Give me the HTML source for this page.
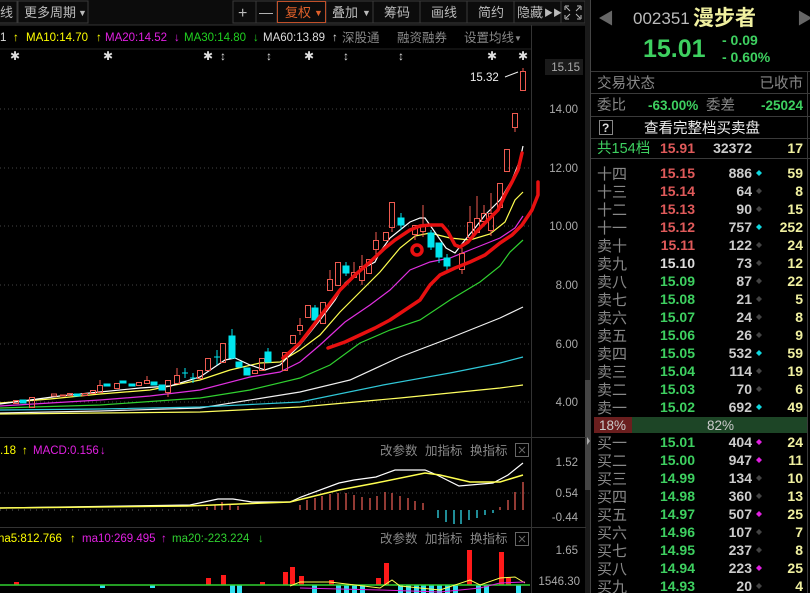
<!DOCTYPE html>
<html><head><meta charset="utf-8"><style>
html,body{margin:0;padding:0;background:#000;width:810px;height:593px;overflow:hidden}
svg{display:block}
text{font-family:"Liberation Sans","Noto Sans CJK SC",sans-serif}
</style></head><body>
<svg width="810" height="593" viewBox="0 0 810 593" xmlns="http://www.w3.org/2000/svg">
<rect width="810" height="593" fill="#000"/>
<!-- toolbar -->
<rect x="0" y="0" width="586" height="25" fill="#0c0c0c"/>
<line x1="0" y1="25" x2="586" y2="25" stroke="#333"/>
<g fill="none" stroke="#3a3a3a">
<rect x="-1" y="1" width="18" height="22"/><rect x="18" y="1" width="70" height="22"/>
<rect x="233" y="1" width="352" height="22"/>
</g>
<g stroke="#3a3a3a"><line x1="256" y1="1" x2="256" y2="23"/><line x1="277" y1="1" x2="277" y2="23"/><line x1="326" y1="1" x2="326" y2="23"/><line x1="373" y1="1" x2="373" y2="23"/><line x1="420" y1="1" x2="420" y2="23"/><line x1="467" y1="1" x2="467" y2="23"/><line x1="514" y1="1" x2="514" y2="23"/><line x1="561" y1="1" x2="561" y2="23"/></g>
<rect x="277.5" y="1.5" width="48" height="21" fill="none" stroke="#c0502a"/>
<g font-size="13" fill="#bbb">
<text x="0" y="17">线</text>
<text x="24" y="17">更多周期</text><text x="78" y="16" font-size="9">▼</text>
<text x="238" y="18" font-size="16">+</text><text x="259" y="17" font-size="14">—</text>
<text x="285" y="17" fill="#e0602a">复权</text><text x="314" y="16" font-size="9" fill="#e0602a">▼</text>
<text x="332" y="17">叠加</text><text x="362" y="16" font-size="9">▼</text>
<text x="384" y="17">筹码</text><text x="431" y="17">画线</text><text x="478" y="17">简约</text>
<text x="517" y="17">隐藏</text><text x="544" y="16" font-size="9">▶▶</text>
</g>
<g stroke="#bbb" fill="none" stroke-width="1"><path d="M565 6h4M565 6v4M581 6h-4M581 6v4M565 19h4M565 19v-4M581 19h-4M581 19v-4M566 7l4 4M580 7l-4 4M566 18l4-4M580 18l-4-4"/></g>
<!-- MA legend -->
<g font-size="11.5" font-family="Liberation Mono,monospace">
<text x="0" y="41" fill="#ddd">1</text><text x="13" y="41" fill="#ff0">↑</text>
<text x="26" y="41" fill="#ff0">MA10:14.70</text><text x="96" y="41" fill="#ff0">↑</text>
<text x="105" y="41" fill="#e020e0">MA20:14.52</text><text x="174" y="41" fill="#e020e0">↓</text>
<text x="184" y="41" fill="#20d020">MA30:14.80</text><text x="253" y="41" fill="#20d020">↓</text>
<text x="263" y="41" fill="#ddd">MA60:13.89</text><text x="332" y="41" fill="#ddd">↑</text>
</g>
<g font-size="12.5" fill="#888"><text x="342" y="42">深股通</text><text x="397" y="42">融资融券</text><text x="464" y="42">设置均线</text><text x="514" y="41" font-size="8">▼</text></g>
<line x1="0" y1="49" x2="531" y2="49" stroke="#222"/>
<g font-size="12" fill="#ddd" text-anchor="middle">
<text x="15" y="60">✱</text><text x="108" y="60">✱</text><text x="208" y="60">✱</text><text x="223" y="60">↕</text><text x="269" y="60">↕</text><text x="309" y="60">✱</text><text x="346" y="60">↕</text><text x="401" y="60">↕</text><text x="492" y="60">✱</text><text x="523" y="60">✱</text>
</g>
<!-- axis -->
<line x1="531.5" y1="25" x2="531.5" y2="593" stroke="#333"/>
<rect x="585" y="0" width="6" height="593" fill="#1a1a1a"/>
<rect x="585" y="380" width="6" height="110" fill="#444"/>
<line x1="590.5" y1="0" x2="590.5" y2="593" stroke="#444"/>
<g stroke="#444" stroke-dasharray="1,3"><line x1="0" y1="109" x2="531" y2="109"/><line x1="0" y1="168" x2="531" y2="168"/><line x1="0" y1="226" x2="531" y2="226"/><line x1="0" y1="285" x2="531" y2="285"/><line x1="0" y1="344" x2="531" y2="344"/><line x1="0" y1="402" x2="531" y2="402"/><line x1="0" y1="493" x2="531" y2="493"/></g>
<rect x="545" y="59" width="38" height="16" fill="#1a1a1a"/>
<g font-size="11.5" fill="#aaa" text-anchor="end" font-family="Liberation Mono,monospace">
<text x="580" y="71">15.15</text><text x="578" y="113">14.00</text><text x="578" y="172">12.00</text><text x="578" y="230">10.00</text><text x="578" y="289">8.00</text><text x="578" y="348">6.00</text><text x="578" y="406">4.00</text>
<text x="578" y="466">1.52</text><text x="578" y="497">0.54</text><text x="578" y="521">-0.44</text>
<text x="578" y="554">1.65</text><text x="580" y="585">1546.30</text>
</g>
<line x1="0" y1="437.5" x2="586" y2="437.5" stroke="#333"/>
<line x1="0" y1="527.5" x2="586" y2="527.5" stroke="#333"/>
<!-- MA lines -->
<g fill="none" stroke-width="1.2">
<polyline stroke="#f0f0f0" points="0,413 100,411 200,408 300,392 350,380 400,357 450,338 500,318 523,307"/>
<polyline stroke="#30c8d8" points="0,410 100,409 200,407 300,402 383,385 450,373 500,363 523,357"/>
<polyline stroke="#ffff60" points="0,414 100,413 200,412 300,407 400,398 500,388 523,385"/>
<polyline stroke="#30d030" points="0,408 100,405 200,398 250,390 300,378 330,365 360,343 390,330 420,320 450,300 480,282 500,266 510,252 523,240"/>
<polyline stroke="#e030e0" points="0,406 50,403 100,400 150,396 200,390 250,377 280,372 300,362 320,345 345,322 370,305 390,290 410,270 430,262 450,258 475,248 500,238 515,228 523,216"/>
<polyline stroke="#ffff50" points="0,403 50,399 100,394 150,390 200,380 230,370 260,363 280,362 300,350 320,335 340,312 360,292 380,272 400,248 415,236 430,233 450,238 470,240 490,234 505,222 515,200 523,192"/>
<polyline stroke="#ffffff" points="0,404 30,400 60,396 100,392 140,388 170,386 200,377 225,360 235,358 250,365 265,370 280,365 300,345 320,320 335,300 345,283 360,270 375,262 380,252 390,238 400,230 410,222 420,218 425,218 432,228 446,248 455,253 465,240 475,228 485,215 500,200 512,180 520,160 523,146"/>
</g>
<!-- candles -->
<g stroke="#ee5a50" fill="none" stroke-width="1">
<rect x="520.5" y="71.5" width="5" height="19"/><path d="M523 68v3"/>
<rect x="512.5" y="113.5" width="5" height="14"/><path d="M515 128v4"/>
<rect x="504.5" y="149.5" width="5" height="22"/>
<rect x="497.5" y="183.5" width="5" height="24"/>
<rect x="488.5" y="213.5" width="5" height="17"/><path d="M491 193v20M491 231v5"/>
<rect x="481.5" y="213.5" width="5" height="8"/><path d="M484 205v8"/>
<rect x="474.5" y="218.5" width="5" height="14"/><path d="M477 196v22"/>
<rect x="467.5" y="222.5" width="5" height="15"/><path d="M470 206v16"/>
<rect x="459.5" y="253.5" width="5" height="16"/><path d="M462 248v5M462 270v4"/>
<rect x="420.5" y="225.5" width="5" height="6"/><path d="M423 205v20M423 232v5"/>
<rect x="412.5" y="225.5" width="5" height="9"/><path d="M415 235v5"/>
<rect x="389.5" y="202.5" width="5" height="25"/><path d="M392 228v4"/>
<rect x="383.5" y="232.5" width="5" height="8"/>
<rect x="373.5" y="240.5" width="5" height="9"/><path d="M376 232v8M376 250v7"/>
<rect x="366.5" y="259.5" width="5" height="14"/>
<rect x="359.5" y="266.5" width="5" height="14"/><path d="M362 255v11M362 280v5"/>
<rect x="351.5" y="272.5" width="5" height="5"/><path d="M354 262v10"/>
<rect x="335.5" y="262.5" width="5" height="23"/>
<rect x="327.5" y="279.5" width="5" height="11"/><path d="M330 270v9"/>
<rect x="320.5" y="302.5" width="5" height="21"/>
<rect x="305.5" y="305.5" width="5" height="12"/>
<rect x="297.5" y="325.5" width="5" height="5"/><path d="M300 318v7M300 330v5"/>
<rect x="290.5" y="335.5" width="5" height="8"/>
<rect x="282.5" y="352.5" width="5" height="18"/>
<rect x="259.5" y="358.5" width="5" height="12"/>
<rect x="252.5" y="370.5" width="5" height="3"/>
<rect x="220.5" y="343.5" width="5" height="19"/>
<rect x="205.5" y="358.5" width="5" height="12"/>
<rect x="197.5" y="370.5" width="5" height="8"/>
<rect x="174.5" y="375.5" width="5" height="8"/><path d="M177 368v7"/>
<rect x="165.5" y="380.5" width="5" height="12"/><path d="M168 393v4"/>
<rect x="144.5" y="380.5" width="5" height="3"/><path d="M147 376v4"/>
<rect x="136.5" y="382.5" width="5" height="3"/>
<rect x="114.5" y="383.5" width="5" height="5"/>
<rect x="97.5" y="385.5" width="5" height="7"/><path d="M100 380v5"/>
<rect x="90.5" y="390.5" width="5" height="3"/>
<rect x="82.5" y="393.5" width="5" height="2"/>
<rect x="67.5" y="393.5" width="5" height="2"/><rect x="60.5" y="395" width="5" height="1"/><rect x="51.5" y="394" width="5" height="2"/>
<rect x="29.5" y="397.5" width="5" height="10"/><rect x="13.5" y="400.5" width="5" height="3"/>
</g>
<g fill="#00e5ee" stroke="#00e5ee">
<rect x="444" y="258" width="6" height="8"/><path d="M447 254v16" fill="none"/>
<rect x="436" y="243" width="6" height="14"/><path d="M439 257v6" fill="none"/>
<rect x="428" y="233" width="6" height="14"/><path d="M431 230v20" fill="none"/>
<rect x="398" y="218" width="6" height="7"/><path d="M401 213v17" fill="none"/>
<rect x="343" y="266" width="6" height="7"/><path d="M346 262v14" fill="none"/>
<rect x="312" y="308" width="6" height="12"/><path d="M315 305v15" fill="none"/>
<rect x="265" y="352" width="6" height="10"/><path d="M268 348v14" fill="none"/>
<rect x="244" y="368" width="6" height="7"/>
<rect x="236" y="362" width="6" height="5"/>
<rect x="229" y="336" width="6" height="22"/><path d="M232 329v30" fill="none"/>
<path d="M214 357h6M217 350v15M190 378h6M193 373v10M182 373h6M185 368v10" fill="none"/>
<rect x="159" y="385" width="6" height="5"/><rect x="151" y="382" width="6" height="3"/>
<rect x="129" y="384" width="6" height="2"/><rect x="120" y="381" width="6" height="2"/>
<rect x="104" y="384" width="6" height="2"/><rect x="74" y="394" width="6" height="2"/>
<rect x="20" y="400" width="6" height="3"/>
</g>
<text x="470" y="81" font-size="11.5" fill="#eee" font-family="Liberation Mono,monospace">15.32</text>
<path d="M505 77l13-5" stroke="#eee" fill="none"/>
<!-- hand drawn -->
<g fill="none" stroke="#e81010" stroke-width="3.5" stroke-linecap="round" stroke-linejoin="round">
<polyline points="283,358 300,343 310,330 325,310 340,290 355,275 370,262 385,248 395,240 410,230 420,226 430,225 442,225 448,232 455,245 460,247 468,242 478,230 488,220 498,210 505,195 512,182 518,170 522,153"/>
<polyline points="328,348 345,342 360,335 375,328 390,320 405,310 420,300 430,285 440,275 455,268 470,262 485,255 500,243 512,235 522,225 532,210 538,195 538,182"/>
<ellipse cx="417" cy="250" rx="5" ry="5"/>
</g>
<!-- MACD -->
<g font-size="11.5" font-family="Liberation Mono,monospace">
<text x="0" y="454" fill="#ff0">.18</text><text x="22" y="454" fill="#ff0">↑</text>
<text x="33" y="454" fill="#e020e0">MACD:0.156</text><text x="100" y="454" fill="#e020e0">↓</text>
</g>
<g font-size="12.5" fill="#888"><text x="380" y="455">改参数</text><text x="425" y="455">加指标</text><text x="470" y="455">换指标</text>
<text x="380" y="543">改参数</text><text x="425" y="543">加指标</text><text x="470" y="543">换指标</text></g>
<g stroke="#666" fill="none"><rect x="515.5" y="443.5" width="13" height="13"/><path d="M519 447l6 6M525 447l-6 6"/>
<rect x="515.5" y="532.5" width="13" height="13"/><path d="M519 536l6 6M525 536l-6 6"/></g>
<g stroke="#e05a50" stroke-width="1.3">
<path d="M207 510v-3M215 510v-5M222 510v-8M230 510v-5M238 510v-4M300 510v-5M307 510v-10M315 510v-12M322 510v-14M330 510v-16M338 510v-17M346 510v-17M354 510v-15M362 510v-13M370 510v-12M377 510v-14M385 510v-18M392 510v-17M400 510v-14M408 510v-12M415 510v-9M423 510v-7M500 510v-3M508 510v-10M515 510v-18M523 510v-28"/>
</g>
<g stroke="#30d8e8" stroke-width="1.3"><path d="M438 510v8M446 510v12M454 510v14M461 510v14M469 510v10M477 510v8M485 510v5M493 510v3"/></g>
<g stroke="#666" stroke-width="1"><path d="M0 510h200" stroke-dasharray="1,5"/></g>
<polyline fill="none" stroke="#fff" stroke-width="1.2" points="0,508 190,505 218,499 233,499 252,502 290,502 301,497 339,483 354,480 376,477 395,470 425,470 437,475 459,486 493,483 508,475 523,463"/>
<polyline fill="none" stroke="#ffff50" stroke-width="1.5" points="0,508 188,506 290,502 339,490 376,483 425,473 440,475 470,482 500,482 523,475"/>
<!-- VOL -->
<g font-size="11.5" font-family="Liberation Mono,monospace">
<text x="-2" y="542" fill="#ff0">na5:812.766</text><text x="70" y="542" fill="#ff0">↑</text>
<text x="82" y="542" fill="#e020e0">ma10:269.495</text><text x="161" y="542" fill="#e020e0">↑</text>
<text x="172" y="542" fill="#30d030">ma20:-223.224</text><text x="258" y="542" fill="#30d030">↓</text>
</g>
<g fill="#ff1a1a">
<rect x="467" y="550" width="5" height="35"/><rect x="499" y="552" width="5" height="33"/><rect x="384" y="563" width="5" height="22"/><rect x="376" y="578" width="5" height="7"/><rect x="290" y="567" width="5" height="18"/><rect x="283" y="572" width="5" height="13"/><rect x="299" y="576" width="5" height="9"/><rect x="221" y="575" width="5" height="10"/><rect x="206" y="578" width="5" height="7"/><rect x="506" y="578" width="5" height="7"/><rect x="260" y="582" width="5" height="3"/><rect x="329" y="580" width="5" height="5"/><rect x="14" y="582" width="5" height="3"/>
</g>
<g fill="#30e0f0">
<rect x="230" y="585" width="5" height="8"/><rect x="237" y="585" width="5" height="8"/><rect x="312" y="585" width="5" height="8"/><rect x="336" y="585" width="5" height="8"/><rect x="344" y="585" width="5" height="8"/><rect x="352" y="585" width="5" height="8"/><rect x="360" y="585" width="5" height="8"/><rect x="398" y="585" width="5" height="8"/><rect x="406" y="585" width="5" height="8"/><rect x="414" y="585" width="5" height="8"/><rect x="421" y="585" width="5" height="8"/><rect x="429" y="585" width="5" height="8"/><rect x="437" y="585" width="5" height="8"/><rect x="445" y="585" width="5" height="8"/><rect x="453" y="585" width="5" height="8"/><rect x="476" y="585" width="5" height="8"/><rect x="484" y="585" width="5" height="8"/><rect x="516" y="585" width="5" height="8"/><rect x="100" y="585" width="5" height="3"/><rect x="150" y="585" width="5" height="3"/>
</g>
<line x1="0" y1="585" x2="530" y2="585" stroke="#30d030" stroke-width="1.5"/>
<polyline fill="none" stroke="#ffff50" points="290,586 300,582 330,582 380,588 392,580 400,586 440,590 470,580 480,585 500,578 515,577 525,583"/>
<polyline fill="none" stroke="#e020e0" points="300,588 380,590 440,592 480,588 500,583 525,582"/>
<!-- RIGHT PANEL -->
<g font-family="Liberation Sans,sans-serif">
<text x="598" y="24" font-size="16" fill="#666">◀</text><text x="797" y="24" font-size="16" fill="#666">▶</text>
<text x="633" y="24" font-size="17" fill="#bbb">002351</text>
<text x="693" y="25" font-size="21" fill="#f0f0a0" font-weight="bold" font-family="Noto Sans CJK SC,sans-serif">漫步者</text>
<text x="643" y="57" font-size="25" fill="#3ed060" font-weight="bold">15.01</text>
<text x="722" y="45" font-size="14" fill="#3ed060" font-weight="bold">- 0.09</text>
<text x="722" y="62" font-size="14" fill="#3ed060" font-weight="bold">- 0.60%</text>
</g>
<g stroke="#3a3a3a"><line x1="591" y1="71.5" x2="810" y2="71.5"/><line x1="591" y1="93.5" x2="810" y2="93.5"/><line x1="591" y1="116.5" x2="810" y2="116.5"/><line x1="591" y1="138.5" x2="810" y2="138.5"/><line x1="591" y1="158.5" x2="810" y2="158.5"/><line x1="807.5" y1="71" x2="807.5" y2="593"/></g>
<g font-size="14.5" fill="#888">
<text x="597" y="88">交易状态</text><text x="803" y="88" text-anchor="end">已收市</text>
<text x="597" y="110">委比</text><text x="706" y="110">委差</text>
</g>
<g font-size="13.5" fill="#3ed060" font-weight="bold"><text x="648" y="110">-63.00%</text><text x="803" y="110" text-anchor="end">-25024</text></g>
<rect x="599.5" y="120.5" width="13" height="14" fill="none" stroke="#888"/><text x="602" y="132" font-size="12" fill="#ddd" font-weight="bold">?</text>
<text x="644" y="133" font-size="14.5" fill="#eee">查看完整档买卖盘</text>
<text x="597" y="153" font-size="14.5" fill="#3ed060">共154档</text>
<g font-size="14" font-weight="bold" text-anchor="end">
<text x="695" y="153" fill="#e05a5a">15.91</text><text x="752" y="153" fill="#ccc">32372</text><text x="803" y="153" fill="#f0f0a0">17</text>
</g>
<!-- sells -->
<g font-size="15" fill="#888">
<text x="597" y="179">十四</text><text x="597" y="197">十三</text><text x="597" y="215">十二</text><text x="597" y="233">十一</text><text x="597" y="251">卖十</text><text x="597" y="269">卖九</text><text x="597" y="287">卖八</text><text x="597" y="305">卖七</text><text x="597" y="323">卖六</text><text x="597" y="341">卖五</text><text x="597" y="359">卖四</text><text x="597" y="377">卖三</text><text x="597" y="395">卖二</text><text x="597" y="413">卖一</text>
<text x="597" y="448">买一</text><text x="597" y="466">买二</text><text x="597" y="484">买三</text><text x="597" y="502">买四</text><text x="597" y="520">买五</text><text x="597" y="538">买六</text><text x="597" y="556">买七</text><text x="597" y="574">买八</text><text x="597" y="592">买九</text>
</g>
<g font-size="14" font-weight="bold" text-anchor="end">
<g fill="#e05a5a"><text x="695" y="178">15.15</text><text x="695" y="196">15.14</text><text x="695" y="214">15.13</text><text x="695" y="232">15.12</text><text x="695" y="250">15.11</text></g>
<text x="695" y="268" fill="#ddd">15.10</text>
<g fill="#3ed060"><text x="695" y="286">15.09</text><text x="695" y="304">15.08</text><text x="695" y="322">15.07</text><text x="695" y="340">15.06</text><text x="695" y="358">15.05</text><text x="695" y="376">15.04</text><text x="695" y="394">15.03</text><text x="695" y="412">15.02</text>
<text x="695" y="447">15.01</text><text x="695" y="465">15.00</text><text x="695" y="483">14.99</text><text x="695" y="501">14.98</text><text x="695" y="519">14.97</text><text x="695" y="537">14.96</text><text x="695" y="555">14.95</text><text x="695" y="573">14.94</text><text x="695" y="591">14.93</text></g>
<g fill="#ccc"><text x="752" y="178">886</text><text x="752" y="196">64</text><text x="752" y="214">90</text><text x="752" y="232">757</text><text x="752" y="250">122</text><text x="752" y="268">73</text><text x="752" y="286">87</text><text x="752" y="304">21</text><text x="752" y="322">24</text><text x="752" y="340">26</text><text x="752" y="358">532</text><text x="752" y="376">114</text><text x="752" y="394">70</text><text x="752" y="412">692</text>
<text x="752" y="447">404</text><text x="752" y="465">947</text><text x="752" y="483">134</text><text x="752" y="501">360</text><text x="752" y="519">507</text><text x="752" y="537">107</text><text x="752" y="555">237</text><text x="752" y="573">223</text><text x="752" y="591">20</text></g>
<g fill="#f0f0a0"><text x="803" y="178">59</text><text x="803" y="196">8</text><text x="803" y="214">15</text><text x="803" y="232">252</text><text x="803" y="250">24</text><text x="803" y="268">12</text><text x="803" y="286">22</text><text x="803" y="304">5</text><text x="803" y="322">8</text><text x="803" y="340">9</text><text x="803" y="358">59</text><text x="803" y="376">19</text><text x="803" y="394">6</text><text x="803" y="412">49</text>
<text x="803" y="447">24</text><text x="803" y="465">11</text><text x="803" y="483">10</text><text x="803" y="501">13</text><text x="803" y="519">25</text><text x="803" y="537">7</text><text x="803" y="555">8</text><text x="803" y="573">25</text><text x="803" y="591">4</text></g>
</g>
<g>
<g fill="#10d8e0"><path d="M759 170l3 3-3 3-3-3z"/><path d="M759 224l3 3-3 3-3-3z"/><path d="M759 350l3 3-3 3-3-3z"/><path d="M759 404l3 3-3 3-3-3z"/></g>
<g fill="#444"><path d="M759 188l3 3-3 3-3-3z"/><path d="M759 206l3 3-3 3-3-3z"/><path d="M759 242l3 3-3 3-3-3z"/><path d="M759 260l3 3-3 3-3-3z"/><path d="M759 278l3 3-3 3-3-3z"/><path d="M759 296l3 3-3 3-3-3z"/><path d="M759 314l3 3-3 3-3-3z"/><path d="M759 332l3 3-3 3-3-3z"/><path d="M759 368l3 3-3 3-3-3z"/><path d="M759 386l3 3-3 3-3-3z"/>
<path d="M759 475l3 3-3 3-3-3z"/><path d="M759 493l3 3-3 3-3-3z"/><path d="M759 529l3 3-3 3-3-3z"/><path d="M759 547l3 3-3 3-3-3z"/><path d="M759 583l3 3-3 3-3-3z"/></g>
<g fill="#e020e0"><path d="M759 439l3 3-3 3-3-3z"/><path d="M759 457l3 3-3 3-3-3z"/><path d="M759 511l3 3-3 3-3-3z"/><path d="M759 565l3 3-3 3-3-3z"/></g>
</g>
<!-- ratio bar -->
<rect x="594" y="417" width="38" height="16" fill="#6a1e1e"/>
<rect x="632" y="417" width="175" height="16" fill="#1d4526"/>
<text x="599" y="430" font-size="13.5" fill="#ccc">18%</text>
<text x="707" y="430" font-size="13.5" fill="#ccc">82%</text>
<path d="M587 437l3 4-3 4z" fill="#aaa"/>
</svg>
</body></html>
